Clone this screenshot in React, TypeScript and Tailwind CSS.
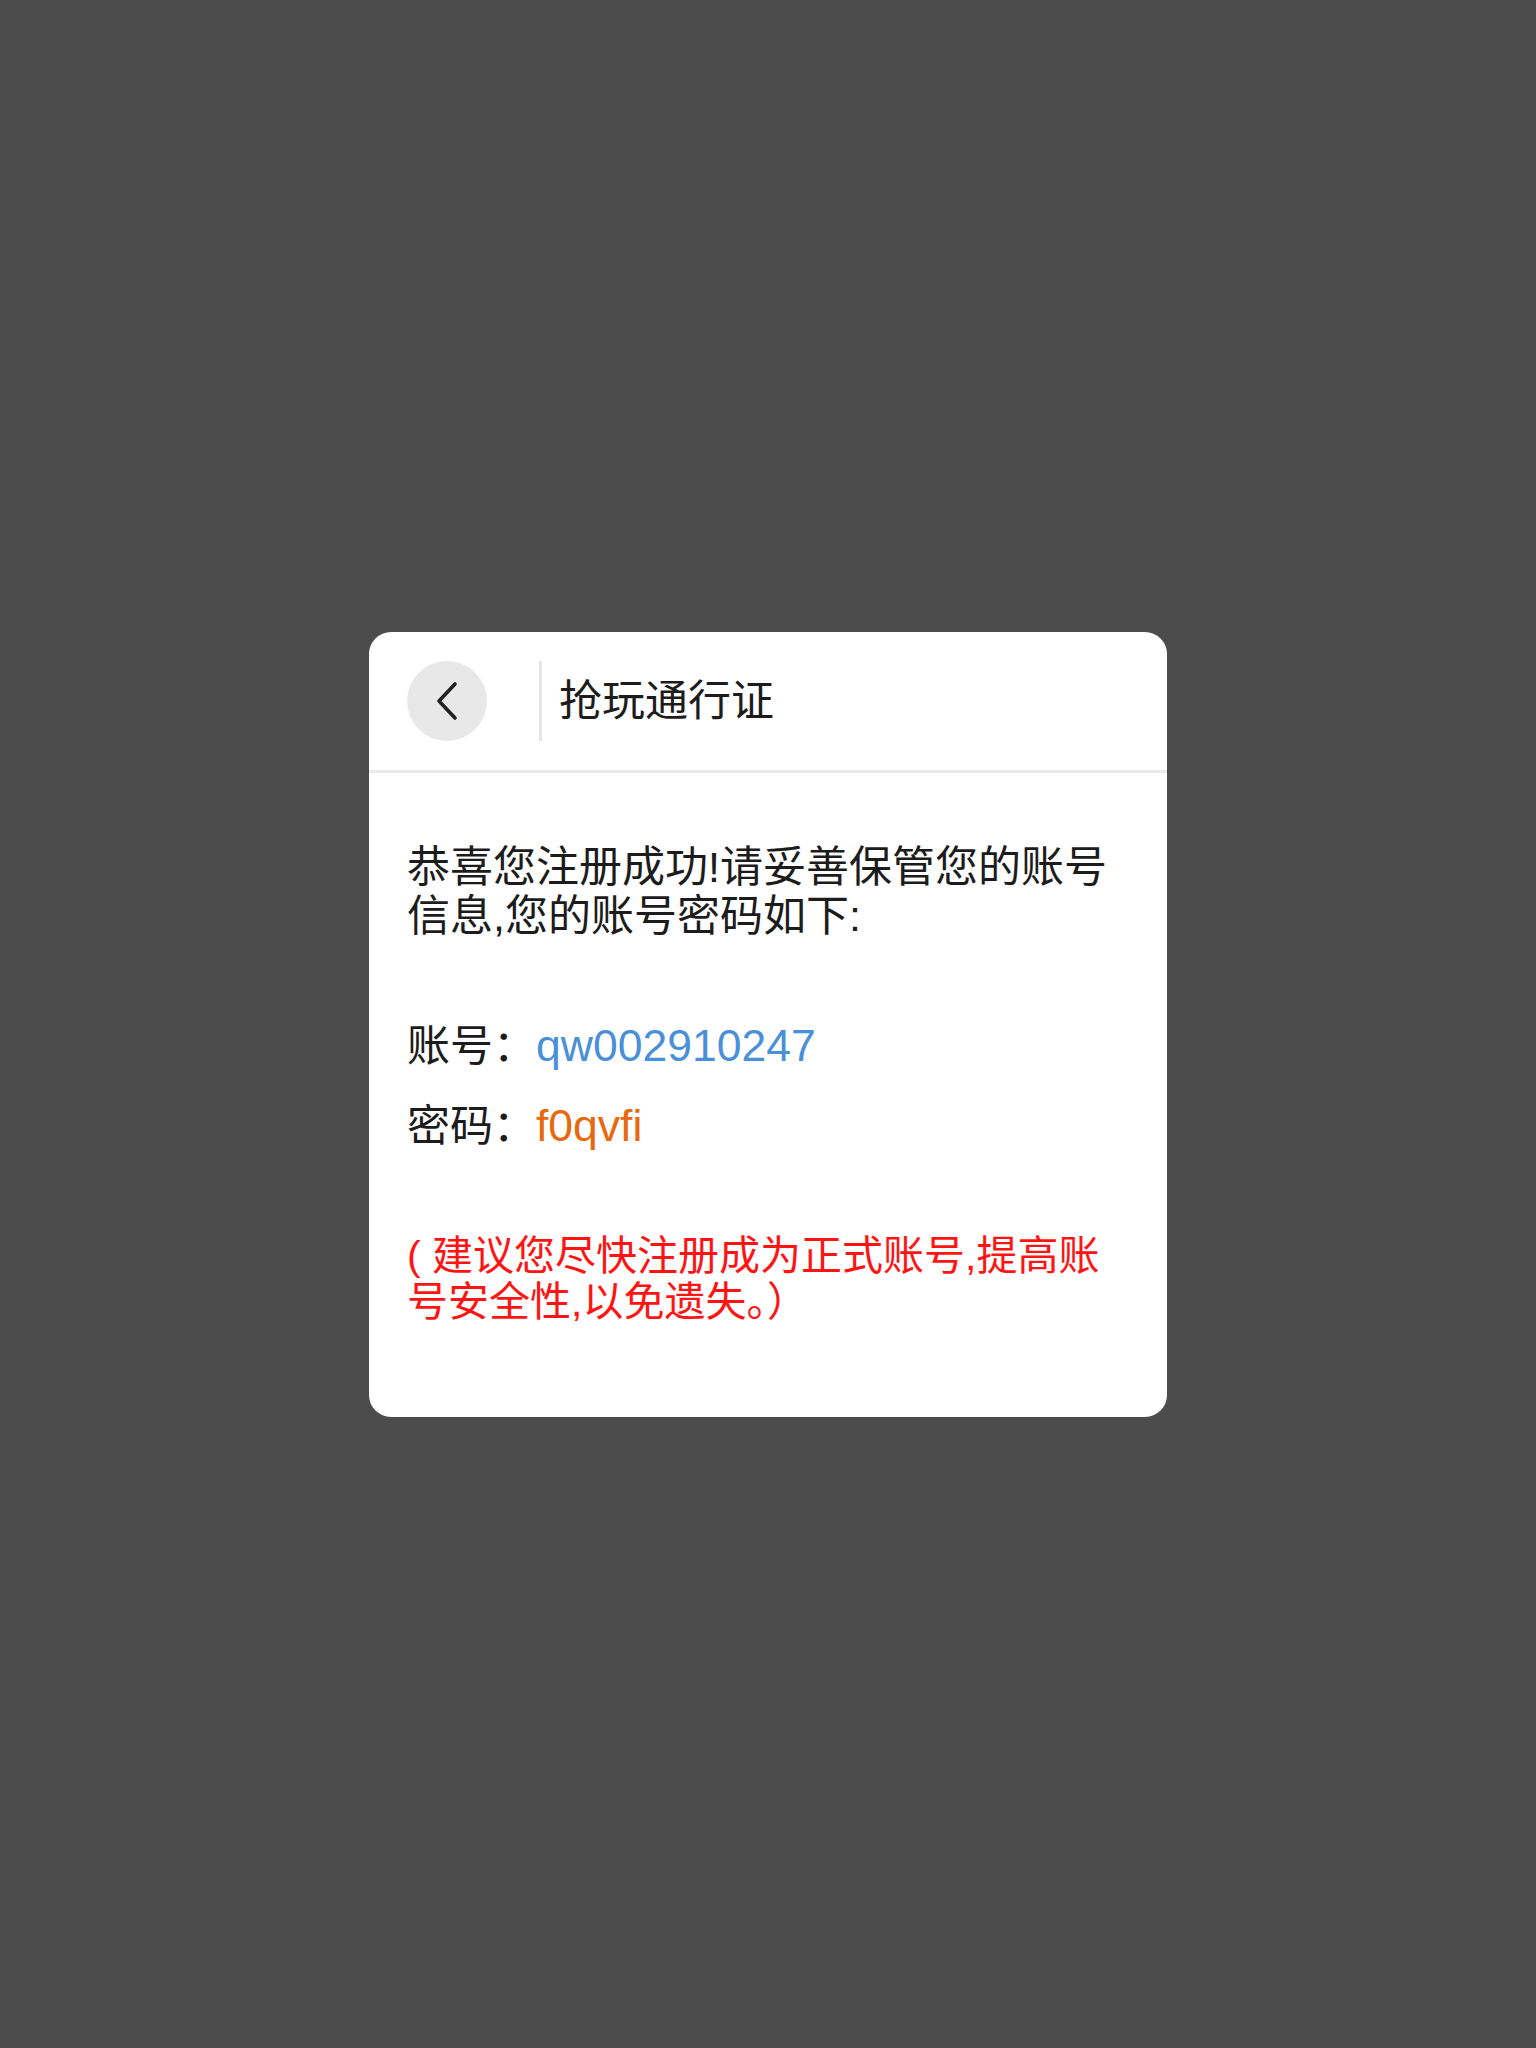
import React from 'react';

const account = { id: 'qw002910247', password: 'f0qvfi' };

const BackButton: React.FC = () => (
  <button
    type="button"
    className="flex h-[80px] w-[80px] shrink-0 items-center justify-center rounded-full bg-[#e8e8e8]"
    aria-label="返回"
  >
    <svg width="80" height="80" viewBox="0 0 80 80" fill="none">
      <polyline
        points="48,23 32,40 48,57"
        stroke="#222222"
        strokeWidth="3.6"
        strokeLinecap="round"
        strokeLinejoin="round"
      />
    </svg>
  </button>
);

export default function App() {
  return (
    <div
      className="flex h-[2048px] w-full items-center justify-center bg-[#4c4c4c]"
      style={{ fontFamily: '"Liberation Sans", "Noto Sans CJK SC", sans-serif' }}
    >
      <div className="w-[798px] overflow-hidden rounded-[22px] bg-white">
        {/* header */}
        <div className="flex h-[141px] items-center border-b-[3px] border-[#ebebeb] pl-[38px]">
          <BackButton />
          <div className="ml-[52px] h-[80px] w-[3px] bg-[#e6e6e6]" />
          <h2 className="ml-[17px] text-[43px] leading-[50px] font-normal text-[#1c1c1c]">抢玩通行证</h2>
        </div>

        {/* body */}
        <div className="pt-[70px] pb-[92px] pl-[38px]">
          <p className="w-[712px] text-[43px] leading-[49px] text-[#1c1c1c]">
            恭喜您注册成功!请妥善保管您的账号信息,您的账号密码如下:
          </p>

          <div className="mt-[80px] flex flex-col gap-[30px] text-[#1c1c1c]">
            <div className="flex items-center text-[43px] leading-[50px]">
              <span>账号：</span>
              <span className="text-[44.5px] text-[#4a90d9]">{account.id}</span>
            </div>
            <div className="flex items-center text-[43px] leading-[50px]">
              <span>密码：</span>
              <span className="text-[44.5px] text-[#e8680e]">{account.password}</span>
            </div>
          </div>

          <p className="mt-[82px] w-[712px] text-[41px] leading-[46px] text-[#ff1414]">
            ( 建议您尽快注册成为正式账号,提高账号安全性,以免遗失。）
          </p>
        </div>
      </div>
    </div>
  );
}
